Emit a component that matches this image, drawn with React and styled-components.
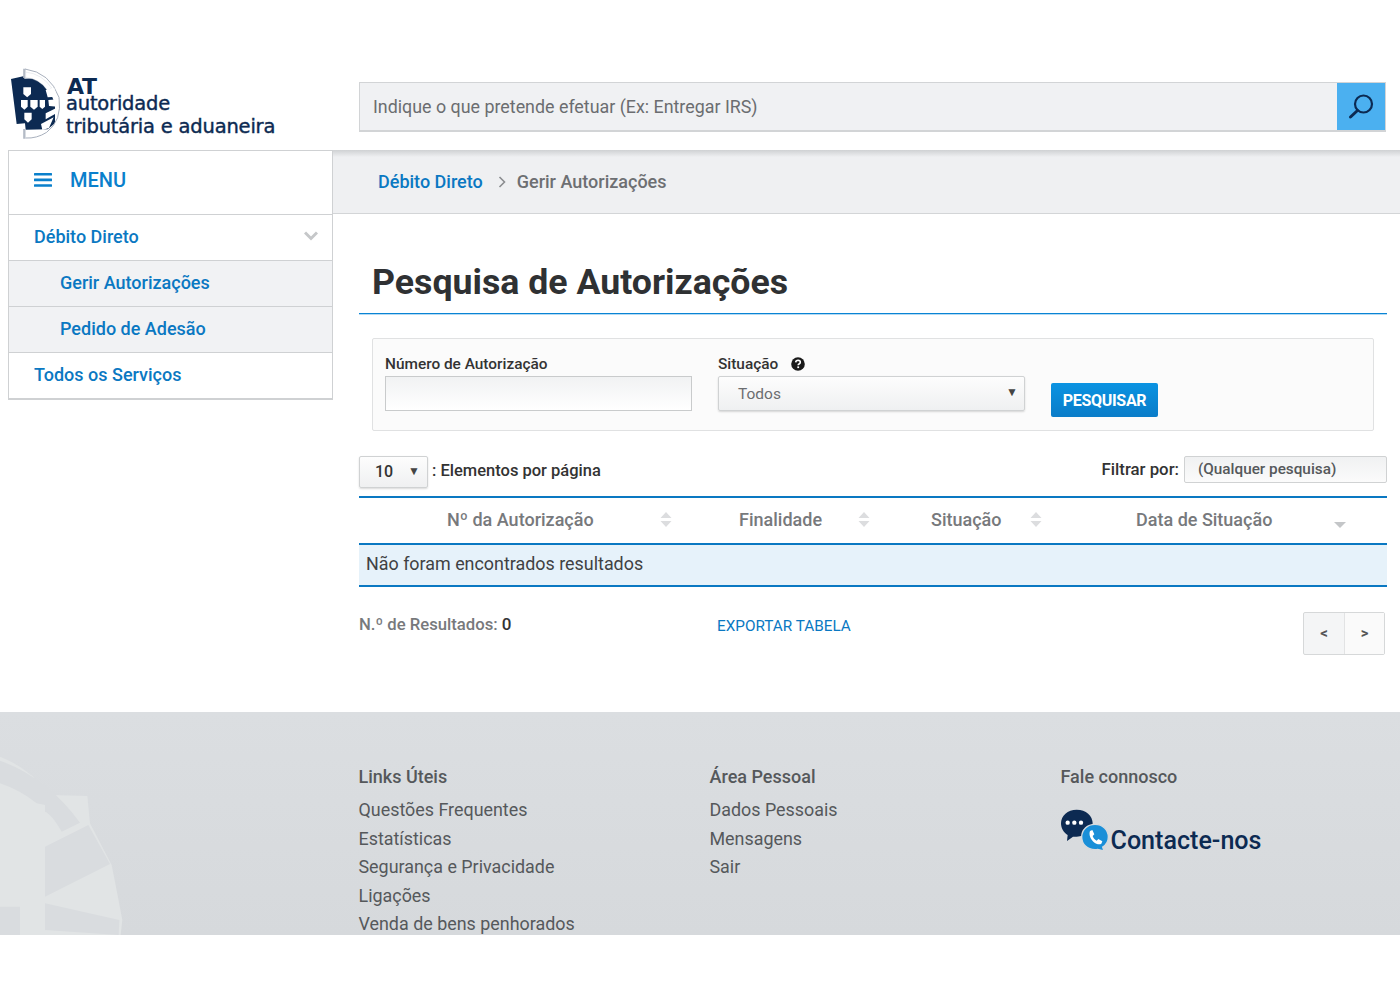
import React from "react";
import styled, { createGlobalStyle } from "styled-components";

const GlobalStyle = createGlobalStyle`
  html, body {
    margin: 0;
    padding: 0;
    background: #fff;
    font-family: Roboto, "Liberation Sans", sans-serif;
  }
  * {
    box-sizing: border-box;
  }
`;

const Page = styled.div`
  width: 1400px;
  height: 1000px;
  overflow: hidden;
  background: #fff;
`;

const Header = styled.header`
  height: 150px;
  padding: 68px 14px 0 5px;
  display: flex;
  align-items: flex-start;
`;

const Logo = styled.div`
  width: 354px;
  display: flex;
  color: #0c2a52;
`;

const LogoMarkSvg = styled.svg`
  flex: none;
  margin-top: -4px;
`;

const LogoText = styled.div`
  margin-left: 1px;
  padding-top: 10px;
  font-family: "DejaVu Sans", sans-serif;
  font-size: 19.5px;
  letter-spacing: -0.2px;
  white-space: nowrap;

  b {
    display: block;
    font-size: 22px;
    line-height: 17px;
    padding-left: 1px;
  }
  span {
    display: block;
    line-height: 18px;
    -webkit-text-stroke: 0.4px #0c2a52;
  }
  span + span {
    margin-top: 5px;
  }
`;

const SearchBar = styled.div`
  flex: 1;
  height: 50px;
  margin-top: 14px;
  display: flex;
  background: #f0f1f3;
  border: 1px solid #d2d4d6;
  border-bottom-width: 2px;
`;

const SearchText = styled.div`
  flex: 1;
  padding-left: 13px;
  line-height: 48px;
  font-size: 17.85px;
  color: #6b6d70;
`;

const SearchButton = styled.div`
  width: 48px;
  background: #4bb0f0;
  display: flex;
  align-items: center;
  justify-content: center;
`;

const Body = styled.div`
  display: flex;
  height: 562px;
`;

const Sidebar = styled.nav`
  width: 325px;
  margin-left: 8px;
  align-self: flex-start;
  border: 1px solid #cfd1d3;
  border-bottom-width: 2px;
  background: #fff;
`;

const MenuHead = styled.div`
  height: 63px;
  padding: 0 0 6px 25px;
  display: flex;
  align-items: center;
  gap: 18px;
  color: #0a80cc;
  font-size: 20px;
  font-weight: 500;
`;

const MenuItem = styled.div`
  height: 46px;
  display: flex;
  align-items: center;
  justify-content: space-between;
  padding: 0 14px 3px ${(p) => (p.$sub ? "51px" : "25px")};
  border-top: 1px solid #cfd1d3;
  background: ${(p) => (p.$sub ? "#f1f2f4" : "#fff")};
  color: #0a78c2;
  font-size: 18px;
  font-weight: 500;
`;

const Main = styled.main`
  flex: 1;
  min-width: 0;
`;

const Breadcrumb = styled.div`
  height: 64px;
  padding: 0 0 0 45px;
  display: flex;
  align-items: center;
  gap: 15px;
  background: linear-gradient(#cfd1d3 0, #eff0f2 7px);
  border-bottom: 1px solid #d3d5d7;
  font-size: 18px;
  font-weight: 500;
  color: #6d6f72;

  a {
    color: #0a78c2;
  }
  svg {
    margin-right: -4px;
  }
`;

const Content = styled.div`
  padding: 0 13px 0 26px;
`;

const Title = styled.h1`
  margin: 0;
  height: 100px;
  padding: 46px 0 0 13px;
  border-bottom: 1px solid #0a84d4;
  box-shadow: 0 1px 0 #b4daf3;
  font-size: 35.7px;
  line-height: 44px;
  font-weight: 700;
  color: #2f3133;
`;

const SearchPanel = styled.div`
  margin: 24px 13px 0;
  height: 93px;
  padding: 16px 12px 0;
  display: flex;
  background: #fbfbfb;
  border: 1px solid #e0e1e2;
  border-radius: 2px;
`;

const Field = styled.div`
  width: ${(p) => p.$width}px;
  margin-right: ${(p) => p.$gap}px;
`;

const Label = styled.div`
  height: 21px;
  padding-bottom: 3px;
  display: flex;
  align-items: center;
  gap: 13px;
  font-size: 15.4px;
  font-weight: 500;
  color: #333;
`;

const TextInput = styled.div`
  height: 35px;
  background: linear-gradient(#f1f2f3, #fff);
  border: 1px solid #c9cbcc;
`;

const SelectBox = styled.div`
  height: ${(p) => p.$height}px;
  display: flex;
  align-items: center;
  justify-content: space-between;
  padding: ${(p) => p.$padding};
  background: linear-gradient(#fdfdfd, #eff0f1);
  border: 1px solid #d0d2d3;
  border-radius: 2px;
  box-shadow: 0 1px 2px rgba(0, 0, 0, 0.15);
  color: ${(p) => p.$color};
  font-size: ${(p) => p.$size}px;

  i {
    font-style: normal;
    font-size: 12px;
    color: #444;
    margin-top: -3px;
  }
`;

const SearchSubmit = styled.button`
  width: 107px;
  height: 34px;
  margin-top: 28px;
  padding: 0;
  border: none;
  border-radius: 2px;
  background: linear-gradient(#0a93e2, #0a7cc8);
  color: #fff;
  font-family: inherit;
  font-size: 16px;
  font-weight: 700;
  letter-spacing: -0.3px;
`;

const TableTools = styled.div`
  height: 65px;
  display: flex;
  align-items: flex-start;
  justify-content: space-between;
  padding-top: 25px;
`;

const ToolGroup = styled.div`
  display: flex;
  align-items: center;
  font-size: ${(p) => p.$size}px;
  font-weight: 500;
  color: #333;

  span {
    margin-bottom: ${(p) => p.$lift}px;
  }
`;

const PageSize = styled(SelectBox)`
  width: 69px;
  margin-right: 4px;
  padding-bottom: 2px;

  i {
    margin-top: 0;
  }
`;

const FilterInput = styled.div`
  width: 203px;
  height: 27px;
  margin-left: 5px;
  padding-left: 13px;
  line-height: 25px;
  font-size: 15.3px;
  font-weight: 500;
  color: #55585b;
  background: linear-gradient(#f0f1f2, #fbfbfb);
  border: 1px solid #d0d2d3;
  border-radius: 2px;
`;

const TableHead = styled.div`
  height: 49px;
  display: grid;
  grid-template-columns: 330px 198px 172px 328px;
  border-top: 2px solid #0a78c2;
  border-bottom: 2px solid #0a78c2;
`;

const HeadCell = styled.div`
  display: flex;
  align-items: center;
  justify-content: space-between;
  padding: ${(p) => p.$padding};
  font-size: 18px;
  font-weight: 500;
  color: #77797c;
`;

const EmptyRow = styled.div`
  height: 42px;
  padding-left: 7px;
  line-height: 38px;
  background: #e6f2fa;
  border-bottom: 2px solid #0a78c2;
  font-size: 17.9px;
  color: #3f4143;
`;

const TableFoot = styled.div`
  height: 125px;
  display: grid;
  grid-template-columns: 358px 1fr auto;
  padding-top: 25px;
`;

const ResultCount = styled.div`
  font-size: 16.7px;
  font-weight: 500;
  line-height: 24px;
  color: #77797c;

  b {
    color: #333;
    font-size: 17px;
    font-weight: 500;
  }
`;

const ExportLink = styled.a`
  padding-top: 2px;
  font-size: 15.3px;
  line-height: 24px;
  color: #0a78c2;
`;

const Pager = styled.div`
  display: flex;
  height: 43px;
  margin-right: 2px;
  border: 1px solid #d6d8d9;
  border-radius: 2px;
  background: #f4f5f6;
`;

const PagerButton = styled.div`
  width: 40px;
  text-align: center;
  line-height: 41px;
  font-weight: 700;
  font-size: 15px;
  color: #555;
  background: ${(p) => (p.$light ? "#fafafa" : "transparent")};
  border-left: ${(p) => (p.$light ? "1px solid #e2e3e4" : "none")};
`;

const Footer = styled.footer`
  position: relative;
  height: 223px;
  overflow: hidden;
  padding: 52px 0 0 358.5px;
  display: grid;
  grid-template-columns: 351px 351px 1fr;
  background: linear-gradient(#dbdee1, #d6d9dc);
`;

const Watermark = styled.svg`
  position: absolute;
  left: 0;
  top: 28px;
`;

const FooterColumn = styled.div`
  position: relative;
`;

const FooterTitle = styled.div`
  height: 26px;
  margin-bottom: 6px;
  line-height: 26px;
  font-size: 18px;
  font-weight: 500;
  color: #55585b;
`;

const FooterLink = styled.div`
  height: 28.6px;
  line-height: 28.6px;
  font-size: 17.9px;
  color: #55585b;
`;

const ContactRow = styled.div`
  display: flex;
  align-items: flex-start;
  margin: 15px 0 0 -6px;
  color: #0c2a52;
  font-size: 25.1px;
  font-weight: 500;
  line-height: 30px;
  white-space: nowrap;

  span {
    margin: 21px 0 0 -4px;
  }
`;

const LogoMark = () => (
  <LogoMarkSvg width="60" height="80" viewBox="0 0 180 240">
    <path d="M18 45 L58 36 L58 44 L106 42 L128 64 L150 120 L150 178 L128 196 L62 197 L60 178 L35 180 Z" fill="#0c2a52" />
    <path d="M58 14 L58 42 M58 195 L58 224" stroke="#b4bbc6" strokeWidth="7" />
    <path d="M60 15 Q135 25 162 100 Q172 170 125 205 Q95 224 62 222" fill="none" stroke="#a8b0bd" strokeWidth="3" />
    <path d="M62 24 Q112 30 140 72 L128 80 Q105 45 62 40 Z" fill="#fff" stroke="#c6ccd4" strokeWidth="1" />
    <path d="M122 78 L148 72 L156 98 L128 100 Z M130 108 L160 106 L158 128 L132 126 Z M122 148 L154 132 L150 150 L122 166 Z M108 180 L146 160 L132 192 L112 198 Z" fill="#fff" />
    <g fill="#fff">
      <path d="M55 70 H78 V90 L66.5 100 L55 90 Z" />
      <path d="M48 108 H68 V128 L58 137 L48 128 Z" />
      <path d="M76 108 H98 V128 L87 137 L76 128 Z" />
      <path d="M104 108 H120 V128 L112 135 L104 128 Z" />
      <path d="M58 146 H80 V166 L69 176 L58 166 Z" />
    </g>
  </LogoMarkSvg>
);

const SearchIcon = () => (
  <svg width="28" height="28" viewBox="0 0 28 28" fill="none" stroke="#0c2a52" strokeWidth="2.2" strokeLinecap="round">
    <circle cx="16.5" cy="11" r="8.5" />
    <path d="M10.5 17.5 L3.5 24" strokeWidth="3" />
  </svg>
);

const MenuIcon = () => (
  <svg width="18" height="14" viewBox="0 0 18 14" fill="#0a80cc">
    <rect width="18" height="2.6" rx="0.5" />
    <rect y="5.6" width="18" height="2.6" rx="0.5" />
    <rect y="11.2" width="18" height="2.6" rx="0.5" />
  </svg>
);

const Chevron = () => (
  <svg width="14" height="10" viewBox="0 0 14 10" fill="none" stroke="#c5c7c9" strokeWidth="3">
    <path d="M1 1.5 L7 7.5 L13 1.5" />
  </svg>
);

const CrumbArrow = () => (
  <svg width="8" height="12" viewBox="0 0 8 12" fill="none" stroke="#8b8d90" strokeWidth="1.6">
    <path d="M1.5 1 L6.5 6 L1.5 11" />
  </svg>
);

const HelpIcon = () => (
  <svg width="14" height="14" viewBox="0 0 14 14">
    <circle cx="7" cy="7" r="6.8" fill="#1a1a1a" />
    <path d="M4.7 5.4 Q4.9 3.3 7.1 3.3 Q9.3 3.4 9.3 5.2 Q9.3 6.3 8 7 Q7.2 7.4 7.2 8.3" fill="none" stroke="#fff" strokeWidth="1.6" />
    <rect x="6.3" y="9.4" width="1.8" height="1.7" fill="#fff" />
  </svg>
);

const SortBoth = () => (
  <svg width="12" height="15" viewBox="0 0 12 15" fill="#dcdddf">
    <path d="M6 0 L11.5 6 L0.5 6 Z M6 15 L0.5 9 L11.5 9 Z" />
  </svg>
);

const SortDown = () => (
  <svg width="12" height="6" viewBox="0 0 12 6" fill="#c4c6c8" style={{ marginTop: 10 }}>
    <path d="M0 0 L12 0 L6 6 Z" />
  </svg>
);

const ChatIcon = () => (
  <svg width="60" height="50" viewBox="0 0 180 150" style={{ flex: "none" }}>
    <path d="M65 14 C93 14 113 32 113 55 C113 78 92 95 65 95 L54 95 L36 108 L38 90 C26 83 18 70 18 55 C18 32 38 14 65 14 Z" fill="#0c2a52" />
    <circle cx="38" cy="53" r="6.5" fill="#fff" />
    <circle cx="58" cy="53" r="6.5" fill="#fff" />
    <circle cx="78" cy="53" r="6.5" fill="#fff" />
    <path d="M120 58 C143 58 160 74 160 96 C160 110 153 120 143 126 L147 138 L128 133 C125 134 122 134 120 134 C97 134 80 118 80 96 C80 74 97 58 120 58 Z" fill="#1a8fd8" stroke="#d8dbde" strokeWidth="4" />
    <path d="M105 78 L112 75 L118 88 L113 93 C115 100 119 104 125 107 L130 102 L142 109 L139 116 C134 120 124 118 115 110 C106 102 101 88 105 78 Z" fill="#fff" />
  </svg>
);

const FooterWatermark = () => (
  <Watermark width="160" height="195" viewBox="0 0 480 585">
    <path d="M0 50 Q90 85 150 165 L262 168 L270 250 L335 375 Q350 450 367 540 L362 585 L0 585 Z" fill="#e1e4e5" />
    <path d="M0 62 Q140 112 240 248 L185 275 Q155 222 135 215 L135 195 L110 190 Q60 150 0 130 Z" fill="#d9dcdf" />
    <path d="M135 320 L265 255 L330 372 L135 470 Z" fill="#d9dcdf" />
    <path d="M135 490 L358 540 L356 585 L135 570 Z" fill="#d9dcdf" />
    <path d="M0 500 L60 500 L60 585 L0 585 Z" fill="#d9dcdf" />
  </Watermark>
);

const footerLinks = [
  {
    title: "Links Úteis",
    links: [
      "Questões Frequentes",
      "Estatísticas",
      "Segurança e Privacidade",
      "Ligações",
      "Venda de bens penhorados",
    ],
  },
  {
    title: "Área Pessoal",
    links: ["Dados Pessoais", "Mensagens", "Sair"],
  },
];

const App = () => {
  return (
    <Page>
      <GlobalStyle />
      <Header>
        <Logo>
          <LogoMark />
          <LogoText>
            <b>AT</b>
            <span>autoridade</span>
            <span>tributária e aduaneira</span>
          </LogoText>
        </Logo>
        <SearchBar>
          <SearchText>Indique o que pretende efetuar (Ex: Entregar IRS)</SearchText>
          <SearchButton>
            <SearchIcon />
          </SearchButton>
        </SearchBar>
      </Header>

      <Body>
        <Sidebar>
          <MenuHead>
            <MenuIcon />
            MENU
          </MenuHead>
          <MenuItem>
            Débito Direto
            <Chevron />
          </MenuItem>
          <MenuItem $sub>Gerir Autorizações</MenuItem>
          <MenuItem $sub>Pedido de Adesão</MenuItem>
          <MenuItem>Todos os Serviços</MenuItem>
        </Sidebar>

        <Main>
          <Breadcrumb>
            <a>Débito Direto</a>
            <CrumbArrow />
            <span>Gerir Autorizações</span>
          </Breadcrumb>

          <Content>
            <Title>Pesquisa de Autorizações</Title>

            <SearchPanel>
              <Field $width={307} $gap={26}>
                <Label>Número de Autorização</Label>
                <TextInput />
              </Field>
              <Field $width={307} $gap={26}>
                <Label>
                  Situação
                  <HelpIcon />
                </Label>
                <SelectBox $height={35} $padding="0 6px 0 19px" $color="#6b6d70" $size={15.5}>
                  Todos
                  <i>▼</i>
                </SelectBox>
              </Field>
              <SearchSubmit>PESQUISAR</SearchSubmit>
            </SearchPanel>

            <TableTools>
              <ToolGroup $size={16.5} $lift={4}>
                <PageSize $height={32} $padding="0 7px 0 15px" $color="#333" $size={16}>
                  10
                  <i>▼</i>
                </PageSize>
                <span>: Elementos por página</span>
              </ToolGroup>
              <ToolGroup $size={16.8} $lift={2}>
                <span>Filtrar por:</span>
                <FilterInput>(Qualquer pesquisa)</FilterInput>
              </ToolGroup>
            </TableTools>

            <TableHead>
              <HeadCell $padding="0 17px 2px 88px">
                Nº da Autorização
                <SortBoth />
              </HeadCell>
              <HeadCell $padding="0 17px 2px 50px">
                Finalidade
                <SortBoth />
              </HeadCell>
              <HeadCell $padding="0 17px 2px 44px">
                Situação
                <SortBoth />
              </HeadCell>
              <HeadCell $padding="0 41px 2px 77px">
                Data de Situação
                <SortDown />
              </HeadCell>
            </TableHead>
            <EmptyRow>Não foram encontrados resultados</EmptyRow>

            <TableFoot>
              <ResultCount>
                N.º de Resultados: <b>0</b>
              </ResultCount>
              <ExportLink>EXPORTAR TABELA</ExportLink>
              <Pager>
                <PagerButton>&lt;</PagerButton>
                <PagerButton $light>&gt;</PagerButton>
              </Pager>
            </TableFoot>
          </Content>
        </Main>
      </Body>

      <Footer>
        <FooterWatermark />
        {footerLinks.map((column) => (
          <FooterColumn key={column.title}>
            <FooterTitle>{column.title}</FooterTitle>
            {column.links.map((link) => (
              <FooterLink key={link}>{link}</FooterLink>
            ))}
          </FooterColumn>
        ))}
        <FooterColumn>
          <FooterTitle>Fale connosco</FooterTitle>
          <ContactRow>
            <ChatIcon />
            <span>Contacte-nos</span>
          </ContactRow>
        </FooterColumn>
      </Footer>
    </Page>
  );
};

export default App;
